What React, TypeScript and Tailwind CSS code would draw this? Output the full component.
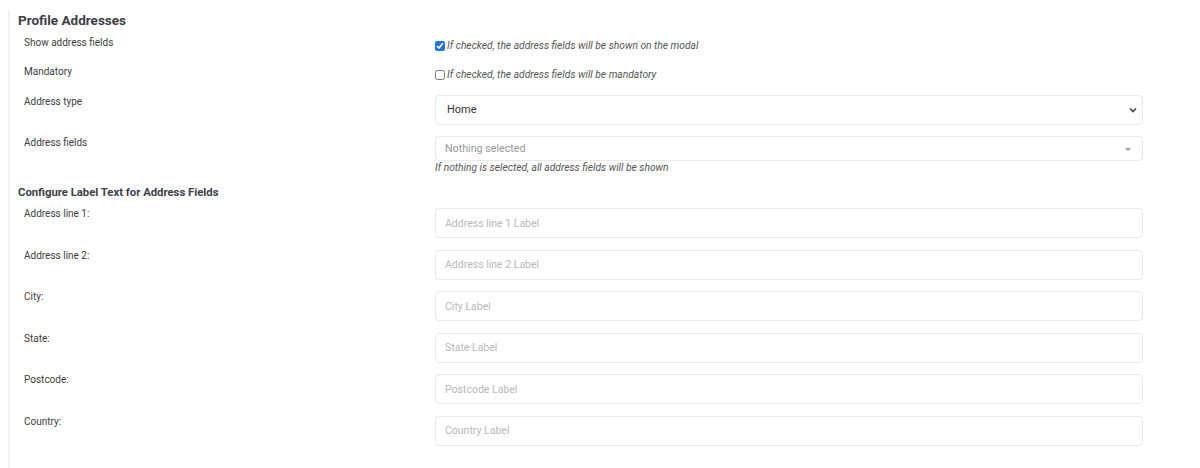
import React from "react";

const labelFields = [
  { label: "Address line 1:", placeholder: "Address line 1 Label" },
  { label: "Address line 2:", placeholder: "Address line 2 Label" },
  { label: "City:", placeholder: "City Label" },
  { label: "State:", placeholder: "State Label" },
  { label: "Postcode:", placeholder: "Postcode Label" },
  { label: "Country:", placeholder: "Country Label" },
];

export default function App() {
  return (
    <div className="w-[1200px] h-[468px] bg-white font-['Roboto',sans-serif] overflow-hidden">
      <div className="ml-[8px] h-full border-l-2 border-[#f1f1f8] pl-[8px]">
        {/* heading */}
        <h2 className="mt-[10px] h-[20px] leading-[20px] text-[13.5px] font-bold text-[#3b3e48]">
          Profile Addresses
        </h2>

        {/* show address fields */}
        <div className="mt-[6px] flex h-[29px] items-start">
          <div className="w-[417px] pl-[6px] text-[10px] leading-[14px] text-[#3d3d3d]">
            Show address fields
          </div>
          <label className="flex items-center gap-[2px] pt-[2px]">
            <input
              type="checkbox"
              defaultChecked
              className="m-0 h-[10px] w-[10px] accent-[#1a73e8]"
            />
            <span className="text-[10.25px] leading-[16px] italic text-[#555]">
              If checked, the address fields will be shown on the modal
            </span>
          </label>
        </div>

        {/* mandatory */}
        <div className="flex h-[30px] items-start">
          <div className="w-[417px] pl-[6px] text-[10px] leading-[14px] text-[#3d3d3d]">
            Mandatory
          </div>
          <label className="flex items-center gap-[2px] pt-[2px]">
            <input type="checkbox" className="m-0 h-[10px] w-[10px]" />
            <span className="text-[10.25px] leading-[16px] italic text-[#555]">
              If checked, the address fields will be mandatory
            </span>
          </label>
        </div>

        {/* address type */}
        <div className="mb-[11px] flex items-start">
          <div className="w-[417px] pl-[6px] pt-[1px] text-[10px] leading-[12px] text-[#3d3d3d]">
            Address type
          </div>
          <div className="relative w-[708px]">
            <select className="h-[30px] w-full appearance-none rounded-[4px] border border-[#e6e8f2] bg-white pl-[11px] text-[11px] text-[#333] outline-none">
              <option>Home</option>
            </select>
            <svg
              className="pointer-events-none absolute right-[6px] top-[12px]"
              width="8"
              height="6"
              viewBox="0 0 8 6"
            >
              <path d="M1 1.5 4 4.5 7 1.5" fill="none" stroke="#444" strokeWidth="1.6" />
            </svg>
          </div>
        </div>

        {/* address fields */}
        <div className="flex items-start">
          <div className="w-[417px] pl-[6px] pt-[1px] text-[10px] leading-[12px] text-[#3d3d3d]">
            Address fields
          </div>
          <div className="w-[708px]">
            <div className="relative flex h-[25px] items-center rounded-[4px] border border-[#e6e8f2] pl-[9px] pt-[1px] text-[10.7px] text-[#999]">
              Nothing selected
              <span className="absolute right-[11px] top-[11px] h-0 w-0 border-x-[3px] border-t-[3px] border-x-transparent border-t-[#999]" />
            </div>
            <div className="text-[10.25px] leading-[14px] italic text-[#555]">
              If nothing is selected, all address fields will be shown
            </div>
          </div>
        </div>

        {/* configure labels */}
        <h3 className="mt-[10px] h-[16px] leading-[16px] text-[11.3px] font-bold text-[#3b3e48]">
          Configure Label Text for Address Fields
        </h3>

        <div className="mt-[7px] flex flex-col gap-[11.6px]">
          {labelFields.map((f) => (
            <div key={f.label} className="flex items-start">
              <div className="w-[417px] pl-[6px] text-[10px] leading-[12px] text-[#3d3d3d]">
                {f.label}
              </div>
              <input
                type="text"
                placeholder={f.placeholder}
                className="h-[30px] w-[708px] rounded-[4px] border border-[#e6e8f2] px-[9px] text-[10.5px] outline-none placeholder:text-[#b8b8bc]"
              />
            </div>
          ))}
        </div>
      </div>
    </div>
  );
}
